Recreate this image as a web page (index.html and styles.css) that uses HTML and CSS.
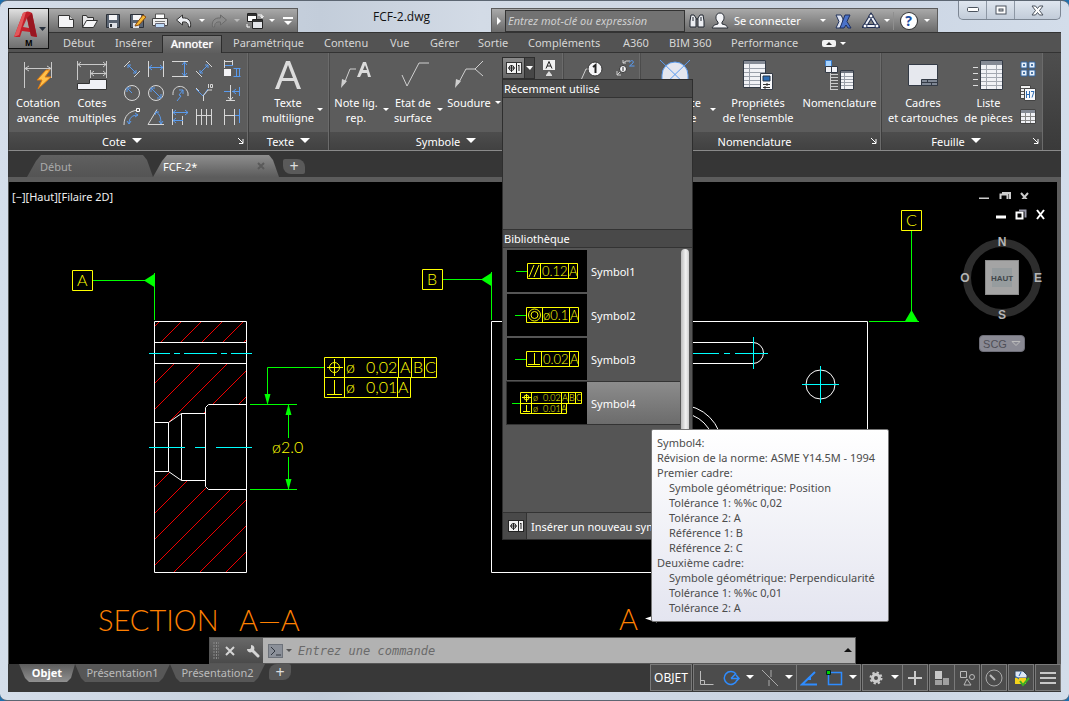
FILE: index.html
```html
<!DOCTYPE html>
<html lang="fr">
<head>
    <meta charset="UTF-8">
    <meta name="viewport" content="width=device-width, initial-scale=1.0">
    <title>FCF-2.dwg</title>
    <link rel="stylesheet" href="styles.css">
</head>
<body>
<div class="window">

    <!-- title bar -->
    <header class="titlebar">
        <button class="app-button" aria-label="Menu">
            <svg width="39" height="39" viewBox="0 0 39 39">
                <path d="M5 28 L14 4 Q19 1 23 4 L28 28 L22 27 L21 23 L13 22 L11 28 Z" fill="#c3202b"/>
                <path d="M5 28 L14 4 L17 3 L10 26 Z" fill="#e4575a"/>
                <path d="M14 18 L18 9 L20 19 Z" fill="#a9a9a9"/>
                <path d="M23 4 L28 28 L22 27 L18 9 Z" fill="#991620"/>
                <path d="M30 18 h7 l-3.500 4 z" fill="#27303c"/>
                <text x="16" y="37" class="app-letter">M</text>
            </svg>
        </button>
        <div class="quick-access">
            <button aria-label="Nouveau"><svg width="18" height="18"><path d="M1.500 3.500h11l4 4v8h-15z" fill="#f4f4f6" stroke="#333"/><path d="M12.500 3.500v4h4" fill="#ccc" stroke="#333"/></svg></button>
            <button aria-label="Ouvrir"><svg width="18" height="18"><path d="M2.500 15.500v-12h4l1 2h6v3" fill="#e8e8ea" stroke="#333"/><path d="M2.500 15.500l4-7h11l-4 7z" fill="#f6f6f8" stroke="#333"/></svg></button>
            <button aria-label="Enregistrer"><svg width="18" height="18"><path d="M2.500 2.500h13v13h-13z" fill="#5b6573" stroke="#2b3038"/><path d="M5 3h8v5h-8z" fill="#f4f4f6"/><path d="M5 11h8v5h-8z" fill="#dfe2e8"/><path d="M6 12h2v3h-2z" fill="#2b3038"/></svg></button>
            <button aria-label="Enregistrer sous"><svg width="18" height="18"><path d="M2.500 2.500h13v13h-13z" fill="#5b6573" stroke="#2b3038"/><path d="M5 3h8v5h-8z" fill="#f4f4f6"/><path d="M5 11h6v5h-6z" fill="#dfe2e8"/><path d="M8 12l7-9 3 2-7 8-4 1z" fill="#f5b731" stroke="#8a4b12"/></svg></button>
            <button aria-label="Imprimer"><svg width="18" height="18"><path d="M4.500 7v-5h9v5" fill="#fff" stroke="#555"/><path d="M1.500 6.500h15v7h-15z" fill="#eee" stroke="#444"/><path d="M4 9h10v1h-10z" fill="#777"/><path d="M4.500 11.500h9v4h-9z" fill="#bcd8f5" stroke="#667"/></svg></button>
            <button aria-label="Annuler"><svg width="18" height="18"><path d="M1.500 8l6-5v3c6-0.500 9 3 8 9l-2 0c0-4-2-5.500-6-5v3z" fill="#eef0f4" stroke="#333"/></svg></button>
            <button class="drop" aria-label="Historique"><svg width="8" height="5"><path d="M1 1h6l-3 3z" fill="#fff"/></svg></button>
            <button aria-label="Rétablir"><svg width="18" height="18"><path d="M16.500 8l-6-5v3c-6-0.500-9 3-8 9l2 0c0-4 2-5.500 6-5v3z" fill="#8b8b8b" stroke="#6b6b6b"/></svg></button>
            <button class="drop" aria-label="Historique"><svg width="8" height="5"><path d="M1 1h6l-3 3z" fill="#bbb"/></svg></button>
            <button aria-label="Fenêtres"><svg width="18" height="18"><path d="M1.500 1.500h9v8h-9z" fill="#fff" stroke="#222"/><path d="M2 2h8v2h-8z" fill="#333"/><path d="M6.500 7.500h10v9h-10z" fill="#e4e6ea" stroke="#222"/><path d="M7 8h9v2h-9z" fill="#333"/><path d="M12 3h4v2M14.500 4l1.500 2 1.500-2M4 15h-3v-3" fill="none" stroke="#fff"/></svg></button>
            <button class="drop" aria-label="Plus"><svg width="8" height="5"><path d="M1 1h6l-3 3z" fill="#fff"/></svg></button>
            <button aria-label="Personnaliser"><svg width="10" height="10"><path d="M0 1h10v2h-10zM1 5h8l-4 4z" fill="#fff"/></svg></button>
        </div>
        <h1 class="doc-title">FCF-2.dwg</h1>
        <div class="infocenter">
            <button class="expand" aria-label="Réduire"><svg width="6" height="10"><path d="M1 1l4 4-4 4z" fill="#fff"/></svg></button>
            <input class="search" type="text" aria-label="Recherche" placeholder="Entrez mot-clé ou expression">
            <button class="find" aria-label="Rechercher"><svg width="18" height="16"><path d="M3 2h3l2 3v9h-6v-6zM15 2h-3l-2 3v9h6v-6z" fill="#eceef2" stroke="#1e242e"/><path d="M8 6h2M5 4v4M13 4v4" stroke="#1e242e"/></svg></button>
            <button class="sign-in"><svg width="18" height="18"><path d="M9 1c5 0 5 7 2 9v2c3 0.500 5 1.500 6 4h-16c1-2.500 3-3.500 6-4v-2c-3-2-3-9 2-9z" fill="#f4f5f8" stroke="#2b3038"/></svg><span>Se connecter</span><svg width="8" height="5"><path d="M1 1h6l-3 3z" fill="#fff"/></svg></button>
            <button class="exchange" aria-label="Exchange"><svg width="18" height="18"><path d="M2 3h5l2 4 0 5-3 4h-4l3-6.500z" fill="#dfe4f1" stroke="#23345f"/><path d="M16 3h-5l-5 13h4l2-3 2 3h3l-4-6.500z" fill="#4b72c9" stroke="#1e2f61"/></svg></button>
            <button class="a360" aria-label="A360"><svg width="18" height="18"><path d="M9 4l6 10h-12z" fill="none" stroke="#1f2c50" stroke-width="4"/><path d="M9 4l6 10h-12z" fill="none" stroke="#eef1f8" stroke-width="2"/><circle cx="9" cy="4" r="2" fill="#fff" stroke="#1f2c50"/><circle cx="15" cy="14" r="2" fill="#fff" stroke="#1f2c50"/><circle cx="3" cy="14" r="2" fill="#fff" stroke="#1f2c50"/></svg><svg width="8" height="5"><path d="M1 1h6l-3 3z" fill="#fff"/></svg></button>
            <button class="help" aria-label="Aide"><span class="help-mark">?</span><svg width="8" height="5"><path d="M1 1h6l-3 3z" fill="#fff"/></svg></button>
        </div>
        <div class="window-controls">
            <button aria-label="Réduire"><svg width="14" height="6"><rect x="1.500" y="0.500" width="11" height="4" rx="1" fill="#fff" stroke="#4b535e"/></svg></button>
            <button aria-label="Restaurer"><svg width="12" height="11"><rect x="1" y="1" width="10" height="8" fill="#fff" stroke="#4b535e"/><rect x="4" y="4" width="4" height="2" fill="#ccc" stroke="#4b535e"/></svg></button>
            <button class="close" aria-label="Fermer"><svg width="13" height="11"><path d="M1 1h3.500l2 2.500 2-2.500h3.500l-3.500 4.500 3.500 4.500h-3.500l-2-2.500-2 2.500h-3.500l3.500-4.500z" fill="#fff" stroke="#4b535e"/></svg></button>
        </div>
    </header>

    <!-- ribbon tabs -->
    <nav class="ribbon-tabs">
        <a href="#">Début</a>
        <a href="#">Insérer</a>
        <a href="#" class="active">Annoter</a>
        <a href="#">Paramétrique</a>
        <a href="#">Contenu</a>
        <a href="#">Vue</a>
        <a href="#">Gérer</a>
        <a href="#">Sortie</a>
        <a href="#">Compléments</a>
        <a href="#">A360</a>
        <a href="#">BIM 360</a>
        <a href="#">Performance</a>
        <button aria-label="Réduire le ruban"><svg width="24" height="9"><rect x="0" y="1" width="14" height="7" rx="2" fill="#f2f2f2"/><path d="M4 6h6l-3-3z" fill="#333"/><path d="M18 3h6l-3 3z" fill="#fff"/></svg></button>
    </nav>

    <!-- ribbon -->
    <section class="ribbon">
        <div class="panel panel-cote">
            <div class="panel-body">
                <button class="big">
                    <svg width="32" height="32"><path d="M2.500 3v26M29.500 3v16M3 9.500h26M7 7l-4 2.500 4 2.500M25 7l4 2.500-4 2.500" fill="none" stroke="#c9c9c9"/><path d="M24 11l-9 10h5l-4 9 13-12h-6l5-7z" fill="#ffc04a" stroke="#e07b10"/></svg>
                    <span>Cotation<br>avancée</span>
                </button>
                <button class="big">
                    <svg width="32" height="32"><path d="M1.500 2v19M30.500 2v17M2 5.500h28M5 3l-3 2.500 3 2.500M27 3l3 2.500-3 2.500M14.500 11v8M15 14.500h15M18 12l-3 2.500 3 2.500M27 12l3 2.500-3 2.500" fill="none" stroke="#c9c9c9"/><path d="M1.500 24.500h12v-4h17v10h-29z" fill="#f0f1f6" stroke="#333"/></svg>
                    <span>Cotes<br>multiples</span>
                </button>
                <div class="tool-grid">
                    <button aria-label="Alignée"><svg width="18" height="18"><path d="M1 7l6-6M11 17l6-6" stroke="#d8d8d8"/><path d="M5 5l8 8M5 8v-3h3M13 10v3h-3" fill="none" stroke="#5a9bee"/></svg></button>
                    <button aria-label="Horizontale"><svg width="18" height="18"><path d="M1.500 1v16M16.500 1v16" stroke="#d8d8d8"/><path d="M2 7.500h14M5 5l-3 2.500 3 2.500M13 5l3 2.500-3 2.500" fill="none" stroke="#5a9bee"/></svg></button>
                    <button aria-label="Verticale"><svg width="18" height="18"><path d="M1 1.500h16M1 16.500h16" stroke="#d8d8d8"/><path d="M13.500 2v14M11 5l2.500-3 2.500 3M11 13l2.500 3 2.500-3" fill="none" stroke="#5a9bee"/></svg></button>
                    <button aria-label="Oblique"><svg width="18" height="18"><path d="M11 1l6 6M1 11l6 6" stroke="#d8d8d8"/><path d="M5 13l8-8M5 10v3h3M13 8v-3h-3" fill="none" stroke="#5a9bee"/></svg></button>
                    <button aria-label="Ordonnée"><svg width="18" height="18"><path d="M1.500 0v8M9.500 0v5M2 1.500h8" stroke="#d8d8d8"/><path d="M2 5.500h8M10.500 8.500h7M10.500 16.500h7M13.500 8v8M16.500 8v8" stroke="#5a9bee"/><path d="M1 9h7v7h-7z" fill="#f3f3f6"/></svg></button>
                    <button aria-label="Rayon"><svg width="18" height="18"><circle cx="9" cy="9" r="7.500" fill="none" stroke="#d8d8d8"/><path d="M9 9l-4-4M4 8v-4h4" fill="none" stroke="#5a9bee"/></svg></button>
                    <button aria-label="Diamètre"><svg width="18" height="18"><circle cx="9" cy="9" r="7.500" fill="none" stroke="#d8d8d8"/><path d="M4 4l10 10M4 8v-4h4M14 10v4h-4" fill="none" stroke="#5a9bee"/></svg></button>
                    <button aria-label="Raccourci"><svg width="18" height="18"><path d="M2 11c-1-10 12-12 15-2v3" fill="none" stroke="#d8d8d8"/><path d="M6 17l4-5-2-1 4-5M8 6h4v4" fill="none" stroke="#5a9bee"/></svg></button>
                    <button aria-label="Chanfrein"><svg width="18" height="18"><path d="M1 5l7 7 5-7" fill="none" stroke="#5a9bee"/><path d="M1 4l3 3M8.500 12v5M8 12l5-6h4M13.500 0v4M15.500 0.500h2v3h-2z" fill="none" stroke="#d8d8d8"/></svg></button>
                    <button aria-label="Coordonnée"><svg width="18" height="18"><path d="M1 7.500h6M9 7.500h7M13 5l-3 2.500 3 2.500M16.500 3v9" fill="none" stroke="#5a9bee"/><path d="M7.500 1v15M5 13l2.500 3 2.500-3M3 16.500h9" fill="none" stroke="#d8d8d8"/></svg></button>
                    <button aria-label="Longueur d'arc"><svg width="18" height="18"><path d="M1 17c0-9 5-14 14-15" fill="none" stroke="#d8d8d8"/><path d="M6 16c0-6 3-9 9-9M4 13l2 3 2-3M12 5l3 2-3 2" fill="none" stroke="#5a9bee"/><path d="M13.500 0.500h3v3h-3z" fill="#666" stroke="#fff"/></svg></button>
                    <button aria-label="Angulaire"><svg width="18" height="18"><path d="M17 16.500h-16l9-15" fill="none" stroke="#d8d8d8"/><path d="M9 4c4 2 5 6 5 12M8 7l1-3 3 0M12 13l2 3 2-3" fill="none" stroke="#5a9bee"/></svg></button>
                    <button aria-label="Ligne de base"><svg width="18" height="18"><path d="M1.500 1v16M11.500 8v9" stroke="#d8d8d8"/><path d="M2 4.500h15M2 12.500h10M5 2l-3 2.500 3 2.500M14 2l3 2.500-3 2.500M5 10l-3 2.500 3 2.500" fill="none" stroke="#5a9bee"/></svg></button>
                    <button aria-label="Continuer"><svg width="18" height="18"><path d="M1.500 1v16M6.500 1v16M11.500 1v16M16.500 1v16M2 7.500h14" stroke="#d8d8d8"/></svg></button>
                    <button aria-label="Insérer une cote"><svg width="18" height="18"><path d="M1.500 1v16M11.500 1v16M2 7.500h10" stroke="#d8d8d8"/><path d="M12 7.500h5M16.500 1v14" stroke="#5a9bee"/></svg></button>
                </div>
            </div>
            <div class="panel-title">Cote <svg width="10" height="6"><path d="M0 0h10l-5 5z" fill="#fff"/></svg><button class="launcher" aria-label="Options de cote"><svg width="6" height="6"><path d="M0 0l5 5M5 1v4.500h-4" fill="none" stroke="#fff"/></svg></button></div>
        </div>

        <div class="panel panel-texte">
            <div class="panel-body">
                <button class="big with-arrow">
                    <svg width="32" height="32"><path d="M3 30L14 2h4l11 28h-4l-3-8h-12l-3 8zM11 19h10l-5-13z" fill="#dcdcdc" fill-rule="evenodd"/></svg>
                    <span>Texte<br>multiligne</span>
                    <svg class="arrow" width="6" height="4"><path d="M0 0h6l-3 3z" fill="#fff"/></svg>
                </button>
            </div>
            <div class="panel-title">Texte <svg width="10" height="6"><path d="M0 0h10l-5 5z" fill="#fff"/></svg></div>
        </div>

        <div class="panel panel-symbole">
            <div class="panel-body">
                <button class="big with-arrow">
                    <svg width="32" height="32"><path d="M4 25l6-15h6" fill="none" stroke="#cfcfcf"/><path d="M1 29l1-9 5 2z" fill="#cfcfcf"/><path d="M17 18l6-15h3l5 15h-3l-1-4h-5l-2 4zM23 11h4l-2-5z" fill="#dcdcdc" fill-rule="evenodd"/></svg>
                    <span>Note lig.<br>rep.</span>
                    <svg class="arrow" width="6" height="4"><path d="M0 0h6l-3 3z" fill="#fff"/></svg>
                </button>
                <button class="big with-arrow">
                    <svg width="32" height="32"><path d="M5 16l5 11 12-23h10" fill="none" stroke="#cfcfcf"/></svg>
                    <span>Etat de<br>surface</span>
                    <svg class="arrow" width="6" height="4"><path d="M0 0h6l-3 3z" fill="#fff"/></svg>
                </button>
                <button class="big with-arrow">
                    <svg width="32" height="32"><path d="M5 25l8-15h10M30 2l-8 8 8 7" fill="none" stroke="#cfcfcf"/><path d="M2 29l1-9 5 2z" fill="#cfcfcf"/></svg>
                    <span>Soudure</span>
                    <svg class="arrow" width="6" height="4"><path d="M0 0h6l-3 3z" fill="#fff"/></svg>
                </button>
                <div class="gallery-split">
                    <button class="gallery-main" aria-label="Tolérance géométrique"><svg width="18" height="14"><rect x="1.500" y="1.500" width="15" height="11" fill="#f2f2f2" stroke="#333"/><path d="M11.500 2v10M3 7h7M6.500 4v7M14 4v6M13 5l1-1" stroke="#222"/><circle cx="6.500" cy="7" r="2.500" fill="none" stroke="#222"/></svg></button>
                    <button class="gallery-drop" aria-label="Ouvrir la bibliothèque"><svg width="8" height="5"><path d="M0 0h7l-3 4z" fill="#fff"/></svg></button>

                    <div class="gallery">
                        <h2>Récemment utilisé</h2>
                        <div class="recent"></div>
                        <h2>Bibliothèque</h2>
                        <div class="library">
                            <ul>
                                <li>
                                    <svg class="thumb" width="80" height="42"><path d="M9 21.500h12" stroke="#0f0"/><path d="M20.500 13.500h50v15h-50zM33.500 14v14M61.500 14v14M22 27l5-12M27 27l5-12" fill="none" stroke="#ff0"/><text x="35" y="26">0.12</text><text x="62" y="26">A</text></svg>
                                    <span>Symbol1</span>
                                </li>
                                <li>
                                    <svg class="thumb" width="80" height="42"><path d="M8 21.500h12" stroke="#0f0"/><path d="M19.500 13.500h52v15h-52zM35.500 14v14M62.500 14v14" fill="none" stroke="#ff0"/><circle cx="27.500" cy="21" r="6" fill="none" stroke="#ff0"/><circle cx="27.500" cy="21" r="3.500" fill="none" stroke="#ff0"/><text x="36" y="26">ø0.1</text><text x="63" y="26">A</text></svg>
                                    <span>Symbol2</span>
                                </li>
                                <li>
                                    <svg class="thumb" width="80" height="42"><path d="M8 21.500h12" stroke="#0f0"/><path d="M19.500 13.500h52v15h-52zM34.500 14v14M62.500 14v14M21 26.500h12M27.500 15v11" fill="none" stroke="#ff0"/><text x="36" y="26">0.02</text><text x="63" y="26">A</text></svg>
                                    <span>Symbol3</span>
                                </li>
                                <li class="selected">
                                    <svg class="thumb small" width="80" height="42"><path d="M5 21.500h9" stroke="#0f0"/><path d="M13.500 10.500h61v11h-61zM13.500 21.500h46v10h-46zM24.500 11v20M54.500 11v20M61.500 11v10M68.500 11v10M15 15.500h9M19.500 12v8M16 29.500h7M19.500 23v6" fill="none" stroke="#ff0"/><circle cx="19.500" cy="15.500" r="2.500" fill="none" stroke="#ff0"/><text x="26" y="19">ø</text><text x="36" y="19">0.02</text><text x="55" y="19">A</text><text x="62" y="19">B</text><text x="69" y="19">C</text><text x="26" y="30">ø</text><text x="36" y="30">0.01</text><text x="54" y="30">A</text></svg>
                                    <span>Symbol4</span>
                                </li>
                            </ul>
                            <div class="scrollbar"></div>
                        </div>
                        <button class="insert-new"><span class="insert-icon"><svg width="18" height="14"><rect x="1.500" y="1.500" width="15" height="11" fill="#f2f2f2" stroke="#222"/><path d="M11.500 2v10M3 7h7M6.500 4v7M14 4v6M13 5l1-1" stroke="#222"/><circle cx="6.500" cy="7" r="2.500" fill="none" stroke="#222"/></svg></span><span>Insérer un nouveau symbole</span></button>

                        <div class="tooltip" role="tooltip">
                            <p>Symbol4:</p>
                            <p>Révision de la norme: ASME Y14.5M - 1994</p>
                            <p>Premier cadre:</p>
                            <p class="indent">Symbole géométrique: Position</p>
                            <p class="indent">Tolérance 1: %%c 0,02</p>
                            <p class="indent">Tolérance 2: A</p>
                            <p class="indent">Référence 1: B</p>
                            <p class="indent">Référence 2: C</p>
                            <p>Deuxième cadre:</p>
                            <p class="indent">Symbole géométrique: Perpendicularité</p>
                            <p class="indent">Tolérance 1: %%c 0,01</p>
                            <p class="indent">Tolérance 2: A</p>
                        </div>
                    </div>
                </div>
                <button class="datum" aria-label="Référence"><svg width="14" height="18"><rect x="1" y="1" width="12" height="10" fill="#f0f0f0"/><path d="M4 9.500l3-7 3 7M5 7h4" fill="none" stroke="#222"/><path d="M7 12l3 4h-6z" fill="#ddd"/><path d="M4 16h6v1h-6z" fill="#ddd"/></svg></button>
            </div>
            <div class="panel-title">Symbole <svg width="10" height="6"><path d="M0 0h10l-5 5z" fill="#fff"/></svg></div>
        </div>

        <div class="panel panel-repere">
            <div class="panel-body">
                <button class="big" aria-label="Repère">
                    <svg width="32" height="32"><path d="M6 28l8-18h6" fill="none" stroke="#cfcfcf"/><circle cx="23" cy="10" r="7" fill="#f4f4f6" stroke="#333"/><path d="M21 8l2.500-2v8" fill="none" stroke="#222" stroke-width="2"/></svg>
                </button>
                <button class="datum" aria-label="Renuméroter"><svg width="20" height="18"><path d="M1 12v4h4M1 16l4-4M7 4l3-2h4M7 1v3h3" fill="none" stroke="#cfcfcf"/><circle cx="7" cy="10" r="3.500" fill="#f4f4f6" stroke="#333"/><path d="M7 8v4" stroke="#222"/><path d="M13.500 3.500c1-3 5-2 3.500 0.500l-3.500 3h5" fill="none" stroke="#5a9bee"/></svg></button>
            </div>
            <div class="panel-title"></div>
        </div>

        <div class="panel panel-nomenclature">
            <div class="panel-body">
                <button class="big with-arrow">
                    <svg width="34" height="32"><path d="M4 30v-14a13 13 0 0 1 26 0v14z" fill="#e4e6ee" stroke="#5a9bee"/><path d="M2 1l30 29M32 1l-30 29" stroke="#5a9bee"/></svg>
                    <span>Référence<br>de pièce</span>
                    <svg class="arrow" width="6" height="4"><path d="M0 0h6l-3 3z" fill="#fff"/></svg>
                </button>
                <button class="big">
                    <svg width="32" height="32"><path d="M1.500 1.500h22v27h-22z" fill="#f1f2f6" stroke="#333a45"/><path d="M2 2h21v3h-21z" fill="#858b96"/><path d="M2 9.500h21M2 13.500h21M2 17.500h21M2 21.500h21M2 25.500h21M7.500 5v23" stroke="#9aa0aa"/><path d="M18.500 14.500h12v16h-12z" fill="#f6f7fa" stroke="#333a45"/><path d="M21 17h7v5h-7z" fill="#2e6db4" stroke="#234"/><path d="M21 25.500h7M21 28.500h7M25 24v3M23 27v3" stroke="#333"/></svg>
                    <span>Propriétés<br>de l'ensemble</span>
                </button>
                <button class="big">
                    <svg width="32" height="32"><path d="M2.500 1.500h6v6h-6z" fill="#a9d4ff" stroke="#3b7fd0"/><path d="M2.500 7.500h6v6h-6zM8.500 7.500h6v6h-6z" fill="#f2f2f6" stroke="#333a45"/><path d="M7.500 14v17" stroke="#ccc"/><path d="M8 15.500h7M8 18.500h7M8 21.500h7M8 24.500h7M8 27.500h7M8 30.500h7" stroke="#ccc"/><path d="M17.500 11.500h13v19h-13z" fill="#f2f3f6" stroke="#333a45"/><path d="M18 12h12v2h-12z" fill="#6f7580"/><path d="M18 17.500h12M18 20.500h12M18 23.500h12M18 26.500h12M21.500 14v16" stroke="#9aa0aa"/></svg>
                    <span>Nomenclature</span>
                </button>
            </div>
            <div class="panel-title">Nomenclature<button class="launcher" aria-label="Options de nomenclature"><svg width="6" height="6"><path d="M0 0l5 5M5 1v4.500h-4" fill="none" stroke="#fff"/></svg></button></div>
        </div>

        <div class="panel panel-feuille">
            <div class="panel-body">
                <button class="big">
                    <svg width="32" height="32"><path d="M1.500 5.500h29v21h-29z" fill="#e6e8ee" stroke="#333a45"/><path d="M14.500 20.500h16v6h-16z" fill="#7f8794" stroke="#333a45"/><path d="M15 23.500h15M20.500 21v3M24.500 24v3" stroke="#333a45"/></svg>
                    <span>Cadres<br>et cartouches</span>
                </button>
                <button class="big">
                    <svg width="32" height="32"><path d="M8.500 1.500h22v29h-22z" fill="#f1f2f6" stroke="#333a45"/><path d="M9 2h21v4h-21z" fill="#858b96"/><path d="M9 10.500h21M9 14.500h21M9 18.500h21M9 22.500h21M9 26.500h21M14.500 6v24M24.500 6v24" stroke="#a4a9b2"/><path d="M1 8.500h5M1 14.500h5M1 20.500h5M1 26.500h5" stroke="#ddd"/></svg>
                    <span>Liste<br>de pièces</span>
                </button>
                <div class="side-tools">
                    <button aria-label="Perçages"><svg width="16" height="16"><path d="M1 1h6v6h-6zM9 1h6v6h-6zM1 9h6v6h-6zM9 9h6v6h-6z" fill="#e6effa" stroke="#2f62a0"/><path d="M3.500 3.500h1v1h-1zM11.500 3.500h1v1h-1zM3.500 11.500h1v1h-1zM11.500 11.500h1v1h-1z" stroke="#2f62a0"/></svg></button>
                    <button aria-label="Ajustements"><svg width="16" height="16"><path d="M0.500 0.500h10v13h-10z" fill="#eee" stroke="#444"/><path d="M1 3.500h4M1 6.500h4M1 9.500h4" stroke="#555"/><path d="M4.500 3.500h11v12h-11z" fill="#f8f9fc" stroke="#444"/><path d="M6.500 6v7M9.500 6v7M6 9.500h4M11 6.500h3l-2 6" fill="none" stroke="#2e6db4"/></svg></button>
                    <button aria-label="Tableau"><svg width="16" height="16"><path d="M0.500 0.500h15v14h-15z" fill="#f1f2f6" stroke="#444"/><path d="M1 1h14v3h-14z" fill="#858b96"/><path d="M1 7.500h14M1 11.500h14M5.500 4v10M10.500 4v10" stroke="#888"/></svg></button>
                </div>
            </div>
            <div class="panel-title">Feuille <svg width="10" height="6"><path d="M0 0h10l-5 5z" fill="#fff"/></svg><button class="launcher" aria-label="Options de feuille"><svg width="6" height="6"><path d="M0 0l5 5M5 1v4.500h-4" fill="none" stroke="#fff"/></svg></button></div>
        </div>
    </section>

    <!-- open documents -->
    <nav class="file-tabs">
        <a href="#" class="file-tab">Début</a>
        <a href="#" class="file-tab current">FCF-2*<svg width="8" height="8"><path d="M1 1l6 6M7 1l-6 6" stroke="#5a5a5a" stroke-width="2"/></svg></a>
        <button class="file-add" aria-label="Nouveau dessin">+</button>
    </nav>

    <!-- drawing area -->
    <main class="canvas">
        <svg class="drawing" width="100%" height="100%">
            <g transform="translate(-9 -182)" fill="none">
                <!-- section view hatch -->
                <path class="hatch" d="M154 327l6-6M160 343l21-21M180 343l21-21M201 343l21-21M222 343l21-21M243 343l4-4
                    M154 384l21-21M154 410l47-47M169 422l58-58M204 413l1-1M213 404l34-34M239 404l8-8
                    M154 488l16-16M154 514l34-34M154 540l52-52M154 566l77-77M174 572l73-73M200 572l47-47M226 572l21-21"/>
                <!-- section view outline -->
                <path class="outline" d="M154.500 321.500h92v251h-92zM154.500 342.500h92M154.500 363.500h92
                    M154.500 422.500h14v49h-14M168.500 422.500l13-9v67l-13-9M181.500 413.500h24M181.500 480.500h24
                    M246.500 404.500h-38l-3 3v79l3 3h38"/>
                <path class="axis" d="M149 353.500h21M174 353.500h6M184 353.500h33M221 353.500h6M231 353.500h21M149 447.500h36M195 447.500h10M216 447.500h36"/>
                <!-- plan view -->
                <path class="outline" d="M491.500 321.500h376v251h-376zM640 342.500h113a10.500 10.500 0 0 1 0 21h-113"/>
                <circle class="outline" cx="820.500" cy="384.500" r="14.500"/>
                <circle class="outline" cx="680" cy="447" r="42"/>
                <circle class="outline" cx="680" cy="447" r="34"/>
                <path class="axis" d="M640 353.500h79M724 353.500h6M735 353.500h33M753.500 337v32M802 384.500h37M820.500 366v37"/>
                <!-- datums and dimension lines -->
                <path class="dim" d="M93 280.500h52M154.500 273v47M443 279.500h40M491.500 272v48M911.500 231v80M869 321.500h50
                    M250 404.500h47M250 489.500h47M288.500 405v33M288.500 457v32M324 367.500h-56.500v30"/>
                <path class="arrowhead" d="M144 280.500l11-7v14zM481 279.500l11-7v14zM911.500 310l-7 12h14z
                    M288.500 404l-3 11h6zM288.500 490l-3-11h6zM267.500 405l-3-11h6z"/>
                <path class="frame" d="M72.500 270.500h20v20h-20zM422.500 269.500h20v20h-20zM901.500 210.500h20v20h-20z
                    M324.500 357.500h112v20h-112zM324.500 377.500h86v20h-86zM344.500 357.500v40M398.500 357.500v20M411.500 357.500v20M424.500 357.500v20M397.500 377.500v20
                    M327 367.500h16M334.500 359v17M327 394.500h15M334.500 380v14"/>
                <circle class="frame" cx="334.500" cy="367.500" r="5"/>
                <g class="note">
                    <text x="77" y="286">A</text>
                    <text x="427" y="285">B</text>
                    <text x="906" y="226">C</text>
                    <text x="346" y="373">ø</text><text x="366" y="373">0,02</text><text x="400" y="373">A</text><text x="413" y="373">B</text><text x="425" y="373">C</text>
                    <text x="346" y="393">ø</text><text x="366" y="393">0,01</text><text x="398" y="393">A</text>
                    <text x="272" y="453">ø2.0</text>
                </g>
                <g class="caption">
                    <text x="98" y="631">SECTION</text>
                    <text x="239" y="631">A—A</text>
                    <text x="619" y="630">A</text>
                </g>
                <path d="M645 618.500l12-4v8z" fill="#fff"/>
            </g>
        </svg>

        <p class="view-label">[−][Haut][Filaire 2D]</p>

        <div class="mdi mdi-back">
            <svg width="52" height="7"><path d="M1 6.500h10M22.500 2.500h7v6h-7zM24 1h8v6" fill="none" stroke="#ccc" stroke-width="2"/><path d="M43 1l7 8M50 1l-7 8" stroke="#ccc" stroke-width="2"/></svg>
        </div>
        <div class="mdi">
            <svg width="52" height="11"><path d="M1 8h10" stroke="#fff" stroke-width="3"/><path d="M21.500 3.500h6v6h-6z" fill="none" stroke="#fff" stroke-width="2"/><path d="M24 1.500h6.500v7" fill="none" stroke="#99a" stroke-width="2"/><path d="M42 1l7 9M49 1l-7 9" stroke="#fff" stroke-width="2"/></svg>
        </div>

        <div class="viewcube">
            <svg width="84" height="92">
                <circle cx="42" cy="46" r="35" fill="none" stroke="#2d2d2d" stroke-width="8"/>
                <rect x="25.500" y="28.500" width="33" height="34" fill="#a4a4a4" stroke="#8a8a8a"/>
                <rect x="32" y="36" width="20" height="19" fill="#969c9e"/>
                <text x="42" y="49" class="face">HAUT</text>
                <text x="42" y="14">N</text>
                <text x="42" y="87">S</text>
                <text x="5" y="50">O</text>
                <text x="78" y="50">E</text>
            </svg>
            <button class="ucs">SCG <svg width="10" height="6"><path d="M1 0.500h8l-4 4z" fill="none" stroke="#bbb"/></svg></button>
        </div>

        <form class="command">
            <div class="command-tools">
                <svg width="6" height="18"><path d="M1 0v18M3.500 0v18M6 0v18" stroke="#8a8a8a" stroke-dasharray="2 1"/></svg>
                <button type="button" aria-label="Fermer"><svg width="10" height="10"><path d="M1 1l8 8M9 1l-8 8" stroke="#d5d5d5" stroke-width="2"/></svg></button>
                <button type="button" aria-label="Outils"><svg width="14" height="14"><path d="M6 6l6 6" stroke="#d5d5d5" stroke-width="3" stroke-linecap="round"/><path d="M5 1l0 3-1 1-3 0c0 3 3 4 5 3l2-2c1-2 0-5-3-5z" fill="#d5d5d5"/></svg></button>
            </div>
            <label class="prompt" for="command"><svg width="25" height="14"><rect x="0.500" y="0.500" width="14" height="13" fill="#8b9099" stroke="#6d727a"/><path d="M3 3l4 4-4 4M8 11h5" fill="none" stroke="#30363f"/><path d="M18 5h6l-3 3z" fill="#555"/></svg></label>
            <input id="command" type="text" placeholder="Entrez une commande">
            <button type="button" class="history" aria-label="Historique"><svg width="8" height="5"><path d="M0 4h8l-4-4z" fill="#111"/></svg></button>
        </form>
    </main>

    <!-- layout tabs and status bar -->
    <footer class="bottom">
        <nav class="layout-tabs">
            <a href="#" class="current">Objet</a>
            <a href="#">Présentation1</a>
            <a href="#">Présentation2</a>
            <button aria-label="Nouvelle présentation">+</button>
        </nav>
        <div class="status">
            <button class="space">OBJET</button>
            <div class="group">
                <button class="s-icon" aria-label="Ortho"><svg width="18" height="18"><path d="M3.500 2v13.500h13M3.500 11.500h4v4" fill="none" stroke="#bbb"/></svg></button>
                <button class="s-icon drop-icon" aria-label="Polaire"><svg width="18" height="18"><path d="M14 5a6.500 6.500 0 1 0 1 6M9 9.500h8M9 9.500l5-5M14 6l3 3.500-3 3" fill="none" stroke="#2e8cff" stroke-width="1.500"/></svg><svg width="8" height="5"><path d="M0 0h8l-4 4z" fill="#fff"/></svg></button>
                <button class="s-icon drop-icon" aria-label="Isométrie"><svg width="18" height="18"><path d="M1 1l16 16M10 1v7M8 11v6" stroke="#aaa"/></svg><svg width="8" height="5"><path d="M0 0h8l-4 4z" fill="#fff"/></svg></button>
            </div>
            <div class="group joined">
                <button class="s-icon" aria-label="Repérage"><svg width="18" height="18"><path d="M15 3l-13 12.500h15" fill="none" stroke="#2e8cff" stroke-width="2"/><path d="M8 8h3v3h-3z" fill="#2e8cff"/></svg></button>
                <button class="s-icon drop-icon" aria-label="Accrochage"><svg width="18" height="18"><path d="M3.500 3.500h13v12h-13z" fill="none" stroke="#2e8cff" stroke-width="1.500"/><path d="M1.500 1.500h4v4h-4z" fill="#00d000" stroke="#022"/></svg><svg width="8" height="5"><path d="M0 0h8l-4 4z" fill="#fff"/></svg></button>
            </div>
            <div class="group">
                <button class="s-icon drop-icon" aria-label="Espace de travail"><svg width="18" height="18"><circle cx="9" cy="9" r="3.500" fill="none" stroke="#ccc" stroke-width="3"/><circle cx="9" cy="9" r="5.500" fill="none" stroke="#ccc" stroke-width="2" stroke-dasharray="2.300 2"/></svg><svg width="8" height="5"><path d="M0 0h8l-4 4z" fill="#fff"/></svg></button>
            </div>
            <div class="group joined"><button class="s-icon" aria-label="Ajouter"><svg width="18" height="18"><path d="M2 9h14M9 2v14" stroke="#ccc" stroke-width="2"/></svg></button></div>
            <div class="group"><button class="s-icon" aria-label="Calques"><svg width="18" height="18"><path d="M2 2h7v8h-7z" fill="#c8c8c8"/><path d="M2 11h7v5h-7zM10 9h6v7h-6z" fill="#a0a0a0"/></svg></button></div>
            <div class="group joined"><button class="s-icon" aria-label="Isoler"><svg width="18" height="18"><path d="M2.500 2.500h6v6h-6zM9 10l4 6h-7z" fill="none" stroke="#bbb"/><circle cx="14" cy="8" r="2.500" fill="none" stroke="#bbb"/></svg></button></div>
            <div class="group"><button class="s-icon" aria-label="Performances"><svg width="18" height="18"><circle cx="9" cy="9" r="8" fill="none" stroke="#aaa"/><path d="M5 6l5 5" stroke="#bbb" stroke-width="2"/></svg></button></div>
            <div class="group"><button class="s-icon" aria-label="Lien"><svg width="18" height="18"><path d="M3 2h8l4 4v3h-12z" fill="#dce7f6" stroke="#345"/><path d="M3 9h11v6h-11z" fill="#f3d21c"/><path d="M3 7l4 3M9 3l-2 4" stroke="#2461ad"/><path d="M8 12l3 4 6-7" fill="none" stroke="#3cae22" stroke-width="2"/></svg></button></div>
            <div class="group"><button class="s-icon" aria-label="Personnalisation"><svg width="18" height="18"><path d="M1 4h16M1 9h16M1 14h16" stroke="#c8c8c8" stroke-width="2"/></svg></button></div>
        </div>
    </footer>
</div>
</body>
</html>
```
FILE: styles.css
```css
* {
    box-sizing: border-box;
}
body {
    margin: 0;
    background-color: #1f6fae;
    font-family: "Noto Sans", "Open Sans", sans-serif;
    font-size: 11px;
    line-height: 15px;
    color: #fff;
}
button {
    margin: 0;
    padding: 0;
    border: none;
    background: none;
    color: inherit;
    font: inherit;
    display: flex;
    align-items: center;
    justify-content: center;
}
a {
    color: inherit;
    text-decoration: none;
}
h1, h2, p, ul {
    margin: 0;
    padding: 0;
    font-size: 11px;
    font-weight: normal;
}
svg {
    display: block;
    flex: none;
}
.window {
    height: 100vh;
    display: flex;
    flex-direction: column;
    padding: 0 8px 8px;
    border-radius: 7px;
    border: 1px solid #5c6672;
    border-width: 1px 0;
    background: linear-gradient(90deg, #d5deea, #c3cdda 30%, #d3dbe6 45%, #c9d3e1 75%, #d3ddea);
}

/* title bar */
.titlebar {
    display: flex;
    height: 31px;
    flex: none;
}
.app-button {
    position: relative;
    z-index: 2;
    width: 41px;
    height: 41px;
    margin-top: 7px;
    border: 1px solid #111;
    background: linear-gradient(#e0e0e0, #a2a2a2 45%, #6f6f6f);
}
.app-letter {
    fill: #000;
    font-size: 8px;
    font-weight: bold;
}
.quick-access {
    display: flex;
    align-items: center;
    width: 249px;
    margin-top: 7px;
    padding-left: 5px;
    border: 1px solid #5b5b5b;
    border-width: 1px 1px 0 0;
    background: linear-gradient(#a9a9a9, #6a6a6a);
}
.quick-access button {
    width: 24px;
}
.quick-access .drop {
    width: 12px;
}
.quick-access button:last-child {
    width: 19px;
}
.doc-title {
    flex: 1;
    margin-top: 7px;
    padding-left: 14px;
    color: #111;
    font: 12px "Open Sans", "Noto Sans", sans-serif;
    text-align: center;
    line-height: 18px;
}
.infocenter {
    display: flex;
    align-items: center;
    width: 447px;
    margin-top: 7px;
    border: 1px solid #5b5b5b;
    border-width: 1px 1px 0 1px;
    background: linear-gradient(#a9a9a9, #6a6a6a);
}
.infocenter .expand {
    width: 13px;
}
.search {
    width: 180px;
    height: 22px;
    padding: 0 2px;
    border: 1px solid #333;
    border-radius: 0;
    background-color: #727272;
    font: italic 11px "Noto Sans", "Open Sans", sans-serif;
}
.search::placeholder {
    color: #cfcfcf;
    opacity: 1;
}
.find {
    width: 24px;
}
.sign-in {
    width: 118px;
    gap: 5px;
    padding-left: 2px;
}
.sign-in svg:last-child {
    margin-left: auto;
}
.exchange {
    width: 32px;
}
.a360 {
    width: 35px;
    gap: 3px;
    border-right: 1px solid #8f8f8f;
}
.help {
    flex: 1;
    gap: 6px;
}
.help-mark {
    width: 16px;
    height: 16px;
    border-radius: 50%;
    background-color: #fff;
    box-shadow: 0 0 0 1px #333;
    color: #1c4fa3;
    font-size: 14px;
    font-weight: bold;
    line-height: 16px;
}
.window-controls {
    display: flex;
    width: 103px;
    height: 19px;
    margin-left: 20px;
    border: 1px solid #7c8693;
    border-top: none;
    border-radius: 0 0 5px 5px;
    background: linear-gradient(#dfe6ef, #c2ccd9);
}
.window-controls button {
    width: 28px;
    border-right: 1px solid #8d97a4;
}
.window-controls .close {
    flex: 1;
    border: none;
}

/* ribbon tabs */
.ribbon-tabs {
    display: grid;
    grid-template-columns: 52px 49px 60px 91px 66px 40px 48px 50px 95px 46px 62px 94px 40px;
    flex: none;
    height: 21px;
    padding-left: 53px;
    border-top: 1px solid #333;
    border-bottom: 1px solid #333;
    background-color: #535353;
    color: #d6d6d6;
    line-height: 20px;
}
.ribbon-tabs a {
    padding-left: 2px;
}
.ribbon-tabs a:nth-child(n+4) {
    padding-left: 11px;
}
.ribbon-tabs .active {
    height: 19px;
    margin-top: 2px;
    padding: 0;
    border: 1px solid #2c2c2c;
    border-bottom: none;
    background: linear-gradient(#777, #5c5c5c);
    color: #fff;
    line-height: 15px;
    text-align: center;
    text-shadow: 0 0 1px #fff;
}

/* ribbon */
.ribbon {
    display: flex;
    flex: none;
    height: 98px;
    border-bottom: 1px solid #8a8a8a;
    border-left: 1px solid #333;
    background: linear-gradient(#4e4e4e, #3a3a3a);
}
.panel {
    display: flex;
    flex-direction: column;
    border-right: 1px solid #6b6b6b;
    margin-right: 1px;
    background-color: #5c5c5c;
}
.panel-cote { width: 239px; }
.panel-texte { width: 80px; }
.panel-symbole { width: 233px; }
.panel-repere { width: 76px; }
.panel-nomenclature { width: 240px; }
.panel-feuille { width: 161px; }
.panel-body {
    display: grid;
    flex: 1;
    padding-top: 4px;
    align-items: start;
}
.panel-cote .panel-body { grid-template-columns: 58px 50px 1fr; }
.panel-texte .panel-body { padding-left: 11px; padding-right: 4px; }
.panel-symbole .panel-body { grid-template-columns: 60px 54px 58px 33px 1fr; }
.panel-repere .panel-body { grid-template-columns: 48px 1fr; }
.panel-nomenclature .panel-body { grid-template-columns: 76px 82px 1fr; }
.panel-feuille .panel-body { grid-template-columns: 82px 49px 1fr; }
.panel-title {
    display: flex;
    align-items: center;
    justify-content: center;
    gap: 6px;
    height: 18px;
    background: linear-gradient(#4d4d4d, #414141);
}
.launcher {
    width: 12px;
    margin-left: auto;
}
.panel-title:has(.launcher)::before {
    content: "";
    margin-right: auto;
}
.big {
    display: grid;
    justify-items: center;
    gap: 4px 0;
    padding-top: 2px;
    white-space: nowrap;
}
.with-arrow {
    grid-template-columns: 1fr 8px;
}
.with-arrow span {
    grid-column: 1;
}
.arrow {
    align-self: center;
}
.tool-grid {
    display: grid;
    grid-template-columns: 24px 24px 24px 24px 1fr;
    padding-left: 3px;
}
.tool-grid button {
    height: 24px;
}
.gallery-split {
    position: relative;
    display: flex;
    height: 22px;
    border: 1px solid #2e2e2e;
    background-color: #474747;
}
.gallery-main {
    width: 21px;
    background: linear-gradient(#8a8a8a, #666);
}
.gallery-drop {
    flex: 1;
    border-left: 1px solid #2e2e2e;
}
.datum {
    justify-self: center;
    padding-top: 2px;
}
.side-tools button {
    width: 100%;
    height: 24px;
}

/* symbol gallery */
.gallery {
    position: absolute;
    z-index: 5;
    top: 21px;
    left: -1px;
    width: 191px;
    border: 1px solid #2e2e2e;
    background-color: #555;
}
.gallery h2 {
    padding-left: 1px;
    border-bottom: 1px solid #333;
    background-color: #494949;
    line-height: 17px;
}
.recent {
    height: 132px;
    border-bottom: 1px solid #333;
    background-color: #5c5c5c;
}
.library {
    display: flex;
    gap: 1px;
    height: 264px;
    padding: 1px 3px 0 3px;
}
.gallery ul {
    flex: 1;
    list-style: none;
}
.gallery li {
    display: flex;
    align-items: center;
    gap: 4px;
    height: 44px;
    border: 1px solid transparent;
    border-right: none;
}
.gallery li.selected {
    border-color: #333;
    background: linear-gradient(#8c8c8c, #6c6c6c);
}
.thumb {
    background-color: #000;
}
.thumb text {
    fill: #ff0;
    font: 300 13px Lato, sans-serif;
}
.thumb.small text {
    font-size: 9px;
}
.scrollbar {
    width: 8px;
    border-radius: 4px 4px 0 0;
    background: linear-gradient(90deg, #bbb, #f2f2f2 60%, #ccc);
}
.insert-new {
    justify-content: flex-start;
    gap: 4px;
    width: 100%;
    height: 27px;
    border-top: 1px solid #333;
    background-color: #5c5c5c;
    white-space: nowrap;
}
.insert-icon {
    display: flex;
    align-items: center;
    width: 24px;
    height: 26px;
    padding-left: 4px;
    border-right: 1px solid #333;
    background-color: #494949;
}
.tooltip {
    position: absolute;
    top: 349px;
    left: 148px;
    width: 238px;
    padding: 5px 5px 6px;
    border: 1px solid #767676;
    border-radius: 2px;
    background: linear-gradient(#fff, #e4e5f0);
    color: #4c4c4c;
    white-space: nowrap;
}
.tooltip .indent {
    padding-left: 12px;
}

/* open documents */
.file-tabs {
    display: flex;
    align-items: flex-end;
    flex: none;
    height: 31px;
    padding-left: 19px;
    border-bottom: 5px solid #5c5c5c;
    background-color: #363636;
}
.file-tab {
    display: flex;
    align-items: center;
    justify-content: space-between;
    width: 126px;
    height: 22px;
    padding: 0 14px 0 13px;
    border-radius: 10px 10px 0 0;
    background: linear-gradient(#606060, #545454);
    color: #aaa;
    clip-path: polygon(0 100%, 9px 6px, 14px 0, 116px 0, 120px 5px, 100% 100%);
}
.file-tab.current {
    background: linear-gradient(#8e8e8e, #5c5c5c);
    color: #fff;
    padding-left: 10px;
}
.file-add {
    width: 22px;
    height: 15px;
    margin: 0 0 3px 4px;
    border-radius: 2px 8px 2px 8px;
    background-color: #5a5a5a;
    color: #ddd;
    font-size: 16px;
}

/* drawing area */
.canvas {
    position: relative;
    flex: 1;
    min-height: 0;
    border-left: 1px solid #555;
    border-right: 4px solid #5c5c5c;
    background-color: #000;
}
.drawing {
    position: absolute;
    top: 0;
    left: 0;
}
.hatch {
    stroke: #f00000;
    shape-rendering: crispEdges;
}
.outline { stroke: #fff; }
.axis { stroke: #0ff; }
.dim { stroke: #0f0; }
.arrowhead { fill: #0f0; }
.frame { stroke: #ff0; }
.note {
    fill: #ff0;
    font: 300 16px Lato, sans-serif;
}
.caption {
    fill: #ff8000;
    font: 300 29px Lato, sans-serif;
}
.view-label {
    position: absolute;
    top: 7px;
    left: 3px;
    color: #eee;
}
.mdi {
    position: absolute;
    top: 27px;
    right: 10px;
}
.mdi-back {
    top: 10px;
    right: 27px;
}
.viewcube {
    position: absolute;
    top: 50px;
    right: 13px;
    display: flex;
    flex-direction: column;
    align-items: center;
    gap: 11px;
}
.viewcube text {
    fill: #b5b5b5;
    font: bold 12px "Liberation Sans", sans-serif;
    text-anchor: middle;
}
.viewcube .face {
    fill: #40464a;
    font-size: 8px;
}
.ucs {
    gap: 4px;
    width: 46px;
    height: 17px;
    border: 1px solid #6e6e78;
    border-radius: 4px;
    background-color: #8a8a94;
    color: #4f4f57;
    font: 11px "Liberation Sans", sans-serif;
}
.command {
    position: absolute;
    left: 200px;
    right: 201px;
    bottom: 0;
    display: flex;
    align-items: center;
    height: 27px;
    border: 1px solid #555;
    background-color: #b2b2b2;
}
.command-tools {
    display: flex;
    align-items: center;
    gap: 6px;
    width: 53px;
    height: 25px;
    padding-left: 3px;
    background: linear-gradient(#686868, #4a4a4a);
}
.command-tools button + button {
    margin-left: 5px;
}
.prompt {
    padding: 0 5px;
}
.command input {
    flex: 1;
    padding: 0;
    border: none;
    background: none;
    font: italic 12px "DejaVu Sans Mono", monospace;
}
.command input::placeholder {
    color: #6a6a6a;
    opacity: 1;
}
.history {
    width: 15px;
}

/* layout tabs and status bar */
.bottom {
    display: flex;
    justify-content: space-between;
    flex: none;
    height: 28px;
    background-color: #383838;
}
.layout-tabs {
    display: flex;
    padding-left: 11px;
}
.layout-tabs a {
    width: 95px;
    height: 18px;
    border-radius: 0 0 6px 6px;
    background-color: #575757;
    color: #bbb;
    text-align: center;
    line-height: 18px;
    clip-path: polygon(0 0, 100% 0, 88px 14px, 84px 100%, 10px 100%, 6px 14px);
}
.layout-tabs .current {
    width: 56px;
    background: linear-gradient(#5c5c5c, #909090);
    color: #fff;
    font-weight: bold;
    clip-path: polygon(0 0, 100% 0, 52px 14px, 48px 100%, 10px 100%, 6px 14px);
}
.layout-tabs button {
    width: 22px;
    height: 16px;
    margin-left: 4px;
    border-radius: 8px 2px 8px 2px;
    background-color: #575757;
    color: #ddd;
    font-size: 16px;
}
.status {
    display: flex;
    gap: 1px;
}
.status .space {
    width: 42px;
    font-size: 12px;
}
.status .space, .group {
    display: flex;
    height: 27px;
    border: 1px solid #7a7a7a;
    background-color: #4c4c4c;
}
.group.joined {
    margin-left: -2px;
}
.s-icon {
    width: 24px;
}
.s-icon.drop-icon {
    width: 39px;
    gap: 6px;
}
```
